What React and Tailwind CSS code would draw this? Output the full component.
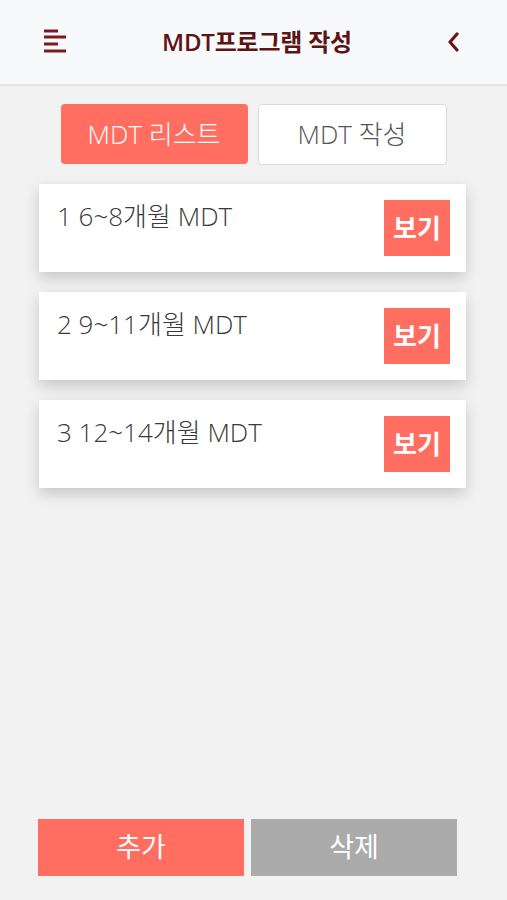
import React from "react";

const font = { fontFamily: '"Open Sans", "Noto Sans CJK KR", sans-serif' };

function Card({ label }) {
  return (
    <div className="flex items-start justify-between bg-white h-[88px] pl-[18px] pr-[16px] pt-[16px] shadow-[0_6px_14px_rgba(0,0,0,0.18)]">
      <span className="text-[26px] leading-[34px] font-light text-[#3a3a3a] mt-[-1px]">{label}</span>
      <button className="w-[66px] h-[56px] bg-[#ff6e61] text-white text-[26px] font-bold flex items-center justify-center">
        보기
      </button>
    </div>
  );
}

export default function App() {
  return (
    <div className="w-[507px] h-[900px] bg-[#f2f2f2] flex flex-col" style={font}>
      <header className="h-[86px] bg-[#f8f9fb] border-b-2 border-[#e4e4e4] flex items-center justify-between pl-[43px] pr-[46px] shrink-0">
        <svg width="24" height="24" viewBox="0 0 24 24" className="mt-[-2px]">
          <g stroke="#7a1c1c" strokeWidth="3" strokeLinecap="butt">
            <line x1="1" y1="2" x2="15" y2="2" />
            <line x1="1" y1="8" x2="23" y2="8" />
            <line x1="1" y1="15" x2="15" y2="15" />
            <line x1="1" y1="22" x2="23" y2="22" />
          </g>
        </svg>
        <h1 className="text-[24px] font-semibold text-[#5c1414] tracking-[-0.2px] ml-[0px]">MDT프로그램 작성</h1>
        <svg width="14" height="20" viewBox="0 0 14 20">
          <polyline points="10,2 3,10 10,18" fill="none" stroke="#6b1616" strokeWidth="3.2" strokeLinecap="round" strokeLinejoin="round" />
        </svg>
      </header>

      <div className="flex justify-center gap-[10px] mt-[18px]">
        <button className="w-[187px] h-[60px] rounded-[4px] bg-[#ff6e61] text-white text-[26px] font-light">MDT 리스트</button>
        <button className="w-[189px] h-[61px] rounded-[4px] bg-white border border-[#dcdcdc] text-[#555] text-[26px] font-light">MDT 작성</button>
      </div>

      <div className="flex flex-col gap-[20px] mt-[19px] ml-[39px] w-[427px]">
        <Card label="1 6~8개월 MDT" />
        <Card label="2 9~11개월 MDT" />
        <Card label="3 12~14개월 MDT" />
      </div>

      <div className="flex-1" />

      <div className="flex gap-[7px] pl-[38px] mb-[24px]">
        <button className="w-[206px] h-[57px] bg-[#ff6e61] text-white text-[27px]">추가</button>
        <button className="w-[206px] h-[57px] bg-[#ababab] text-white text-[27px]">삭제</button>
      </div>
    </div>
  );
}
